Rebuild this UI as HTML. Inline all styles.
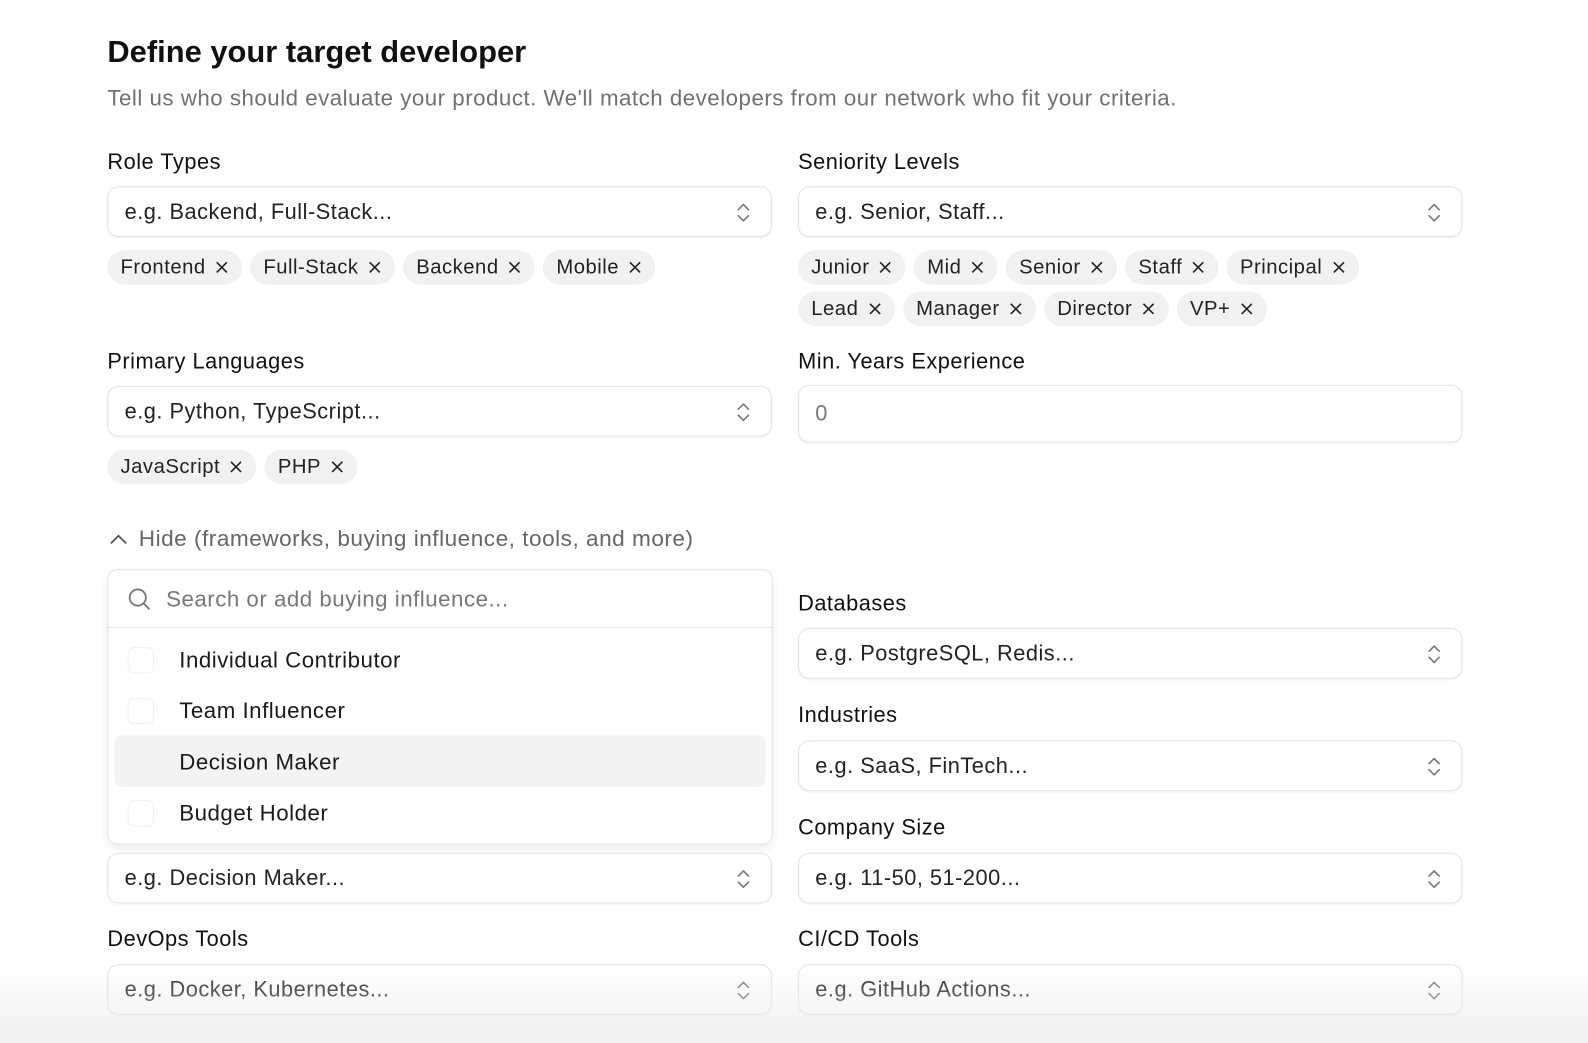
<!DOCTYPE html>
<html><head><meta charset="utf-8"><style>
*{box-sizing:border-box;margin:0;padding:0}
body{width:1588px;height:1040px;overflow:hidden;background:#fff;font-family:"Liberation Sans",sans-serif;color:#111;position:relative}
#w{position:absolute;left:0;top:0;width:1568px;height:1027px;transform:scale(1.0128);transform-origin:0 0;letter-spacing:.5px}
.a{position:absolute}
h1{position:absolute;left:106px;top:34px;font-size:30.5px;font-weight:700;letter-spacing:0}
.sub{left:106px;top:84px;font-size:22px;color:#707070}
.lbl{font-size:21.5px;font-weight:500;color:#111}
.sel{position:absolute;width:656px;height:50px;border:1px solid #e3e3e3;border-radius:11px;background:#fff;box-shadow:0 1px 2px rgba(0,0,0,.05);font-size:21.5px;color:#222;padding-left:16px;line-height:48px}
.sel svg{position:absolute;right:19px;top:14px}
.pills{position:absolute;display:flex;flex-wrap:wrap;gap:7px 8px;width:660px}
.pill{height:34px;border-radius:17px;background:#f1f1f1;font-size:20px;color:#222;padding:0 14px 0 13px;line-height:34px;display:flex;align-items:center;gap:10px}
.pill svg{display:block}
.dd{left:106px;top:562px;width:657px;height:272px;border:1px solid #e2e2e2;border-radius:10px;background:#fff;box-shadow:0 4px 10px rgba(0,0,0,.08)}
.item{position:absolute;left:0;font-size:22px;color:#1a1a1a}
.cb{position:absolute;left:19px;width:26px;height:26px;border:1px solid #f0f0f0;border-radius:6px}
</style></head><body><div id="w">
<h1>Define your target developer</h1>
<div class="a sub">Tell us who should evaluate your product. We'll match developers from our network who fit your criteria.</div>

<div class="a lbl" style="left:106px;top:148px">Role Types</div>
<div class="sel" style="left:106px;top:184px">e.g. Backend, Full-Stack...<svg width="16" height="22" viewBox="0 0 16 22"><path d="M3 8l5-5 5 5M3 14l5 5 5-5" fill="none" stroke="#777" stroke-width="1.6" stroke-linecap="round" stroke-linejoin="round"/></svg></div>
<div class="pills" style="left:106px;top:247px">
<div class="pill">Frontend<svg width="12" height="12"><path d="M1 1l10 10M11 1L1 11" stroke="#222" stroke-width="1.6"/></svg></div>
<div class="pill">Full-Stack<svg width="12" height="12"><path d="M1 1l10 10M11 1L1 11" stroke="#222" stroke-width="1.6"/></svg></div>
<div class="pill">Backend<svg width="12" height="12"><path d="M1 1l10 10M11 1L1 11" stroke="#222" stroke-width="1.6"/></svg></div>
<div class="pill">Mobile<svg width="12" height="12"><path d="M1 1l10 10M11 1L1 11" stroke="#222" stroke-width="1.6"/></svg></div>
</div>

<div class="a lbl" style="left:788px;top:148px">Seniority Levels</div>
<div class="sel" style="left:788px;top:184px">e.g. Senior, Staff...<svg width="16" height="22" viewBox="0 0 16 22"><path d="M3 8l5-5 5 5M3 14l5 5 5-5" fill="none" stroke="#777" stroke-width="1.6" stroke-linecap="round" stroke-linejoin="round"/></svg></div>
<div class="pills" style="left:788px;top:247px;width:580px">
<div class="pill">Junior<svg width="12" height="12"><path d="M1 1l10 10M11 1L1 11" stroke="#222" stroke-width="1.6"/></svg></div>
<div class="pill">Mid<svg width="12" height="12"><path d="M1 1l10 10M11 1L1 11" stroke="#222" stroke-width="1.6"/></svg></div>
<div class="pill">Senior<svg width="12" height="12"><path d="M1 1l10 10M11 1L1 11" stroke="#222" stroke-width="1.6"/></svg></div>
<div class="pill">Staff<svg width="12" height="12"><path d="M1 1l10 10M11 1L1 11" stroke="#222" stroke-width="1.6"/></svg></div>
<div class="pill">Principal<svg width="12" height="12"><path d="M1 1l10 10M11 1L1 11" stroke="#222" stroke-width="1.6"/></svg></div>
<div class="pill">Lead<svg width="12" height="12"><path d="M1 1l10 10M11 1L1 11" stroke="#222" stroke-width="1.6"/></svg></div>
<div class="pill">Manager<svg width="12" height="12"><path d="M1 1l10 10M11 1L1 11" stroke="#222" stroke-width="1.6"/></svg></div>
<div class="pill">Director<svg width="12" height="12"><path d="M1 1l10 10M11 1L1 11" stroke="#222" stroke-width="1.6"/></svg></div>
<div class="pill">VP+<svg width="12" height="12"><path d="M1 1l10 10M11 1L1 11" stroke="#222" stroke-width="1.6"/></svg></div>
</div>

<div class="a lbl" style="left:106px;top:345px">Primary Languages</div>
<div class="sel" style="left:106px;top:381px">e.g. Python, TypeScript...<svg width="16" height="22" viewBox="0 0 16 22"><path d="M3 8l5-5 5 5M3 14l5 5 5-5" fill="none" stroke="#777" stroke-width="1.6" stroke-linecap="round" stroke-linejoin="round"/></svg></div>
<div class="pills" style="left:106px;top:444px">
<div class="pill">JavaScript<svg width="12" height="12"><path d="M1 1l10 10M11 1L1 11" stroke="#222" stroke-width="1.6"/></svg></div>
<div class="pill">PHP<svg width="12" height="12"><path d="M1 1l10 10M11 1L1 11" stroke="#222" stroke-width="1.6"/></svg></div>
</div>

<div class="a lbl" style="left:788px;top:345px">Min. Years Experience</div>
<div class="sel" style="left:788px;top:380px;height:57px;line-height:55px;color:#777">0</div>

<div class="a" style="left:108px;top:519px;font-size:22.3px;color:#666;display:flex;align-items:center;gap:11px"><svg width="18" height="12"><path d="M2 10l7-7 7 7" fill="none" stroke="#555" stroke-width="1.8" stroke-linecap="round" stroke-linejoin="round"/></svg>Hide (frameworks, buying influence, tools, and more)</div>

<div class="a dd">
<svg class="a" style="left:19px;top:17px" width="24" height="24" viewBox="0 0 24 24"><circle cx="10" cy="10" r="8" fill="none" stroke="#777" stroke-width="1.8"/><path d="M16 16l5 5" stroke="#777" stroke-width="1.8" stroke-linecap="round"/></svg>
<div class="a" style="left:57px;top:16px;font-size:22px;color:#777">Search or add buying influence...</div>
<div class="a" style="left:0;top:56px;width:655px;height:1px;background:#e6e6e6"></div>
<div class="a" style="left:6px;top:163px;width:643px;height:51px;border-radius:8px;background:#f3f3f3"></div>
<div class="cb" style="top:76px"></div><div class="item" style="left:70px;top:76px">Individual Contributor</div>
<div class="cb" style="top:126px"></div><div class="item" style="left:70px;top:126px">Team Influencer</div>
<div class="item" style="left:70px;top:177px">Decision Maker</div>
<div class="cb" style="top:227px"></div><div class="item" style="left:70px;top:227px">Budget Holder</div>
</div>

<div class="sel" style="left:106px;top:842px">e.g. Decision Maker...<svg width="16" height="22" viewBox="0 0 16 22"><path d="M3 8l5-5 5 5M3 14l5 5 5-5" fill="none" stroke="#777" stroke-width="1.6" stroke-linecap="round" stroke-linejoin="round"/></svg></div>

<div class="a lbl" style="left:788px;top:584px">Databases</div>
<div class="sel" style="left:788px;top:620px">e.g. PostgreSQL, Redis...<svg width="16" height="22" viewBox="0 0 16 22"><path d="M3 8l5-5 5 5M3 14l5 5 5-5" fill="none" stroke="#777" stroke-width="1.6" stroke-linecap="round" stroke-linejoin="round"/></svg></div>
<div class="a lbl" style="left:788px;top:694px">Industries</div>
<div class="sel" style="left:788px;top:731px">e.g. SaaS, FinTech...<svg width="16" height="22" viewBox="0 0 16 22"><path d="M3 8l5-5 5 5M3 14l5 5 5-5" fill="none" stroke="#777" stroke-width="1.6" stroke-linecap="round" stroke-linejoin="round"/></svg></div>
<div class="a lbl" style="left:788px;top:805px">Company Size</div>
<div class="sel" style="left:788px;top:842px">e.g. 11-50, 51-200...<svg width="16" height="22" viewBox="0 0 16 22"><path d="M3 8l5-5 5 5M3 14l5 5 5-5" fill="none" stroke="#777" stroke-width="1.6" stroke-linecap="round" stroke-linejoin="round"/></svg></div>

<div class="a lbl" style="left:106px;top:915px">DevOps Tools</div>
<div class="sel" style="left:106px;top:952px">e.g. Docker, Kubernetes...<svg width="16" height="22" viewBox="0 0 16 22"><path d="M3 8l5-5 5 5M3 14l5 5 5-5" fill="none" stroke="#777" stroke-width="1.6" stroke-linecap="round" stroke-linejoin="round"/></svg></div>
<div class="a lbl" style="left:788px;top:915px">CI/CD Tools</div>
<div class="sel" style="left:788px;top:952px">e.g. GitHub Actions...<svg width="16" height="22" viewBox="0 0 16 22"><path d="M3 8l5-5 5 5M3 14l5 5 5-5" fill="none" stroke="#777" stroke-width="1.6" stroke-linecap="round" stroke-linejoin="round"/></svg></div>

<div class="a" style="left:0;top:950px;width:1568px;height:80px;background:linear-gradient(rgba(236,236,236,0),rgba(234,234,234,.75));pointer-events:none"></div>
</div></body></html>
